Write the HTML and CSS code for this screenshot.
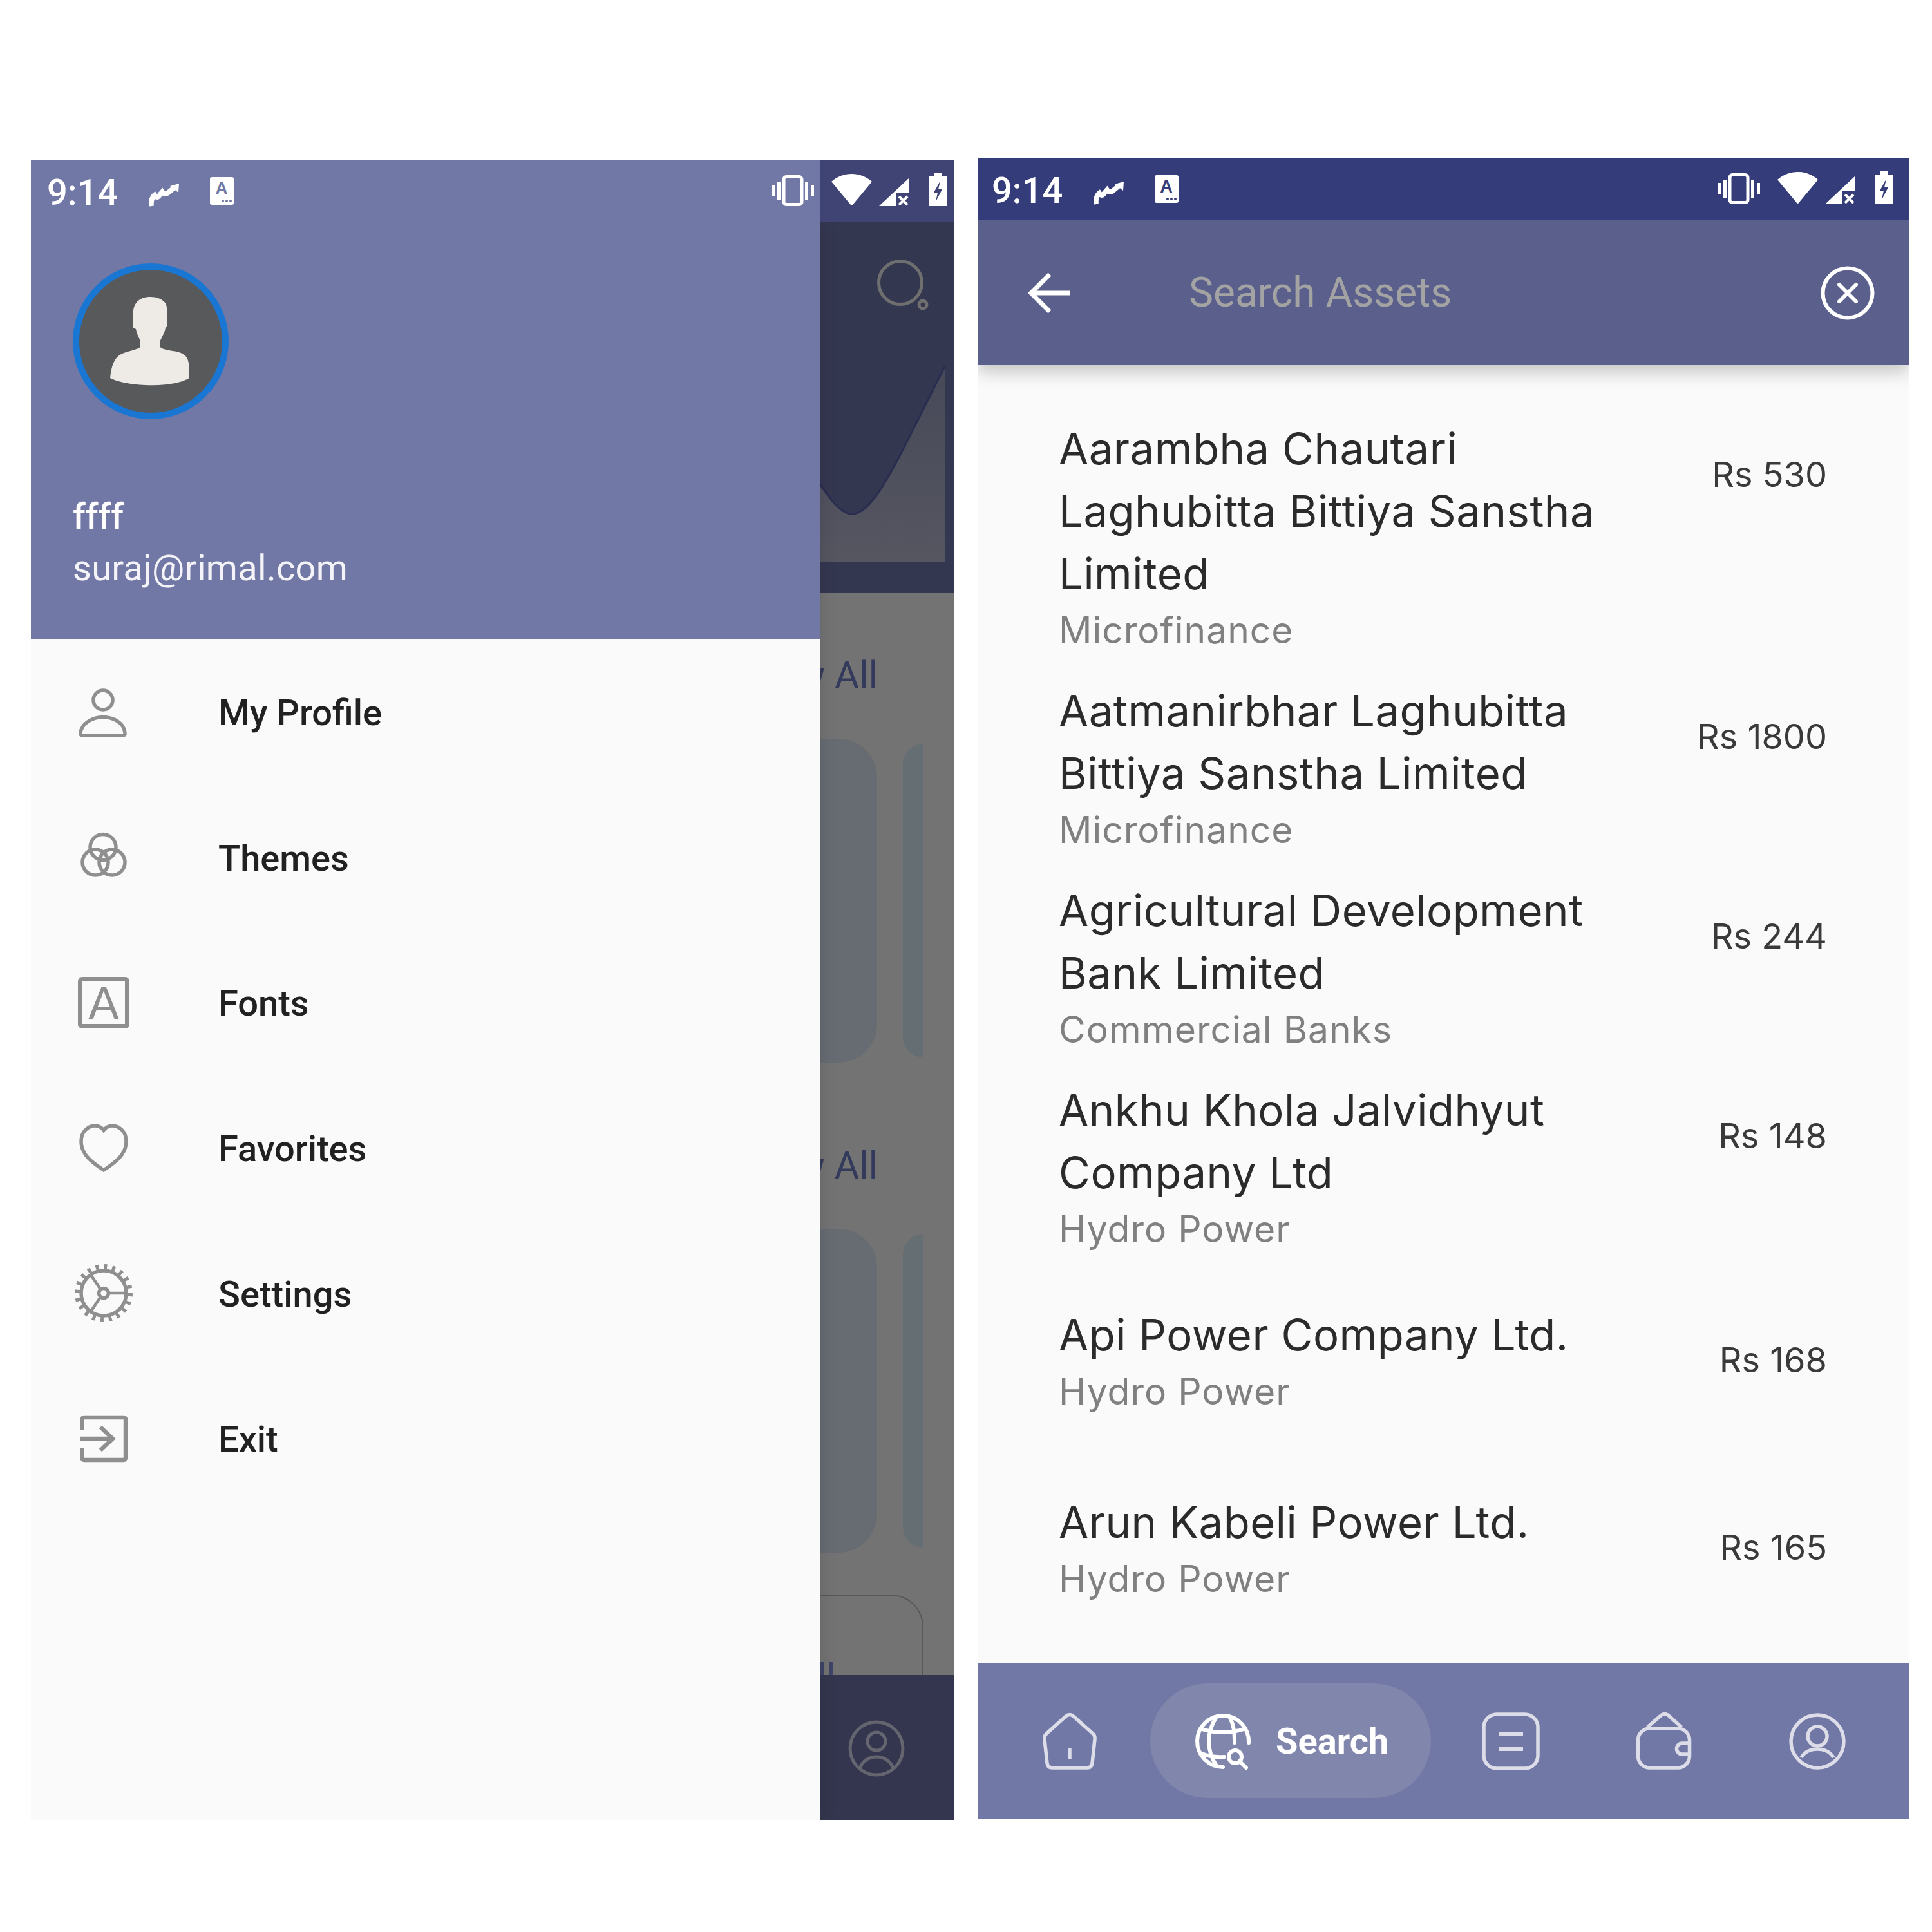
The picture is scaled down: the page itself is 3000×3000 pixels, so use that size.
FILE: index.html
```html
<!DOCTYPE html>
<html lang="en">
<head>
<meta charset="UTF-8">
<title>Assets</title>
<link rel="stylesheet" href="styles.css">
</head>
<body>
<div class="stage">

    <!-- drawer open over the home screen -->
    <div class="phone phone-left">
        <div class="status status-drawer">
            <span class="time">9:14</span>
            <svg class="ic-trend" viewBox="0 0 46 36"><path d="M3 35C2 28 4 21 8 18C10 21 12 22 14 20L20 13C22 16 25 17 28 15L38 7" fill="none" stroke="#fff" stroke-width="8"/><polygon points="32,4 46,0 45,14" fill="#fff"/></svg>
            <svg class="ic-a" viewBox="0 0 37 43"><rect width="37" height="43" rx="3" fill="#fff"/><text x="18" y="27" text-anchor="middle" class="ic-a-letter">A</text><circle cx="20" cy="37" r="2" class="ic-cut"/><circle cx="26" cy="37" r="2" class="ic-cut"/><circle cx="32" cy="37" r="2" class="ic-cut"/></svg>
            <div class="status-right">
                <svg class="ic-vib" viewBox="0 0 68 48"><rect x="20" y="2.5" width="28" height="43" rx="4" fill="none" stroke="#fff" stroke-width="5"/><rect x="10" y="10" width="5" height="28" fill="#fff"/><rect x="1" y="15" width="5" height="18" fill="#fff"/><rect x="53" y="10" width="5" height="28" fill="#fff"/><rect x="62" y="15" width="5" height="18" fill="#fff"/></svg>
                <svg class="ic-wifi" viewBox="0 0 63 50"><path d="M0 12C18-4 45-4 63 12L33 48Q31.5 50 30 48Z" fill="#fff"/></svg>
                <svg class="ic-signal" viewBox="0 0 46 43"><path d="M0 43L46 0V23H26V43Z" fill="#fff"/><path d="M31 28L44 41M44 28L31 41" stroke="#fff" stroke-width="4"/></svg>
                <svg class="ic-batt" viewBox="0 0 29 52"><path d="M9 0H20V6H29V52H0V6H9Z" fill="#fff"/><path d="M18 13L8 31H14L11 45L21 26H15Z" class="ic-cut"/></svg>
            </div>
        </div>
        <div class="split">
            <div class="drawer">
                <div class="drawer-head">
                    <div class="avatar">
                        <svg viewBox="10 1 222 222"><path d="M120 43C106 43 94 51 94 67L94 91L98 93C100 103 104 107 105 113L105 121C100 125 85 127 75 132C65 137 60 149 58 169C85 183 155 185 181 169L180 146C178 133 170 129 155 127C145 125 136 124 135 119L135 113C138 105 143 99 144 91L147 87L146 61C146 49 134 43 120 43Z" fill="#eeebe7"/></svg>
                    </div>
                    <div class="user-name">ffff</div>
                    <div class="user-mail">suraj@rimal.com</div>
                </div>
                <div class="menu">
                    <div class="menu-row">
                        <svg class="menu-ic" viewBox="0 0 96 96"><circle cx="47" cy="29" r="15"/><path d="M12 80C14 64 32 55.5 47 55.5C62 55.5 80 64 81 80C81.5 83 80 84 78 84L15 84C13 84 11.5 83 12 80Z"/></svg>
                        <span>My Profile</span>
                    </div>
                    <div class="menu-row">
                        <svg class="menu-ic" viewBox="0 0 96 96"><circle cx="47" cy="32.5" r="20"/><circle cx="35" cy="56" r="20"/><circle cx="61" cy="56" r="20"/></svg>
                        <span>Themes</span>
                    </div>
                    <div class="menu-row">
                        <svg class="menu-ic" viewBox="0 0 96 96"><rect x="11.5" y="11.5" width="73" height="73" rx="3" stroke-width="7"/><text x="48" y="74" text-anchor="middle" class="menu-a">A</text></svg>
                        <span>Fonts</span>
                    </div>
                    <div class="menu-row">
                        <svg class="menu-ic" viewBox="0 0 96 96"><path d="M48 82C30 70 13 58 13 37C13 22 24 13 35 13C41 13 46 17 48 20C50 17 55 13 61 13C72 13 83 22 83 37C83 58 66 70 48 82Z"/></svg>
                        <span>Favorites</span>
                    </div>
                    <div class="menu-row">
                        <svg class="menu-ic" viewBox="0 0 96 96"><circle cx="48" cy="48" r="35"/><circle cx="48" cy="48" r="41" stroke-width="8" stroke-dasharray="5 7.88"/><circle cx="48" cy="48" r="7.5"/><path d="M55 48H83M43 42L27 18M43 54L27 78" stroke-width="4.5"/></svg>
                        <span>Settings</span>
                    </div>
                    <div class="menu-row">
                        <svg class="menu-ic" viewBox="0 0 96 96"><path d="M14.500 35V18a3 3 0 0 1 3-3H79a3 3 0 0 1 3 3V78a3 3 0 0 1-3 3H17.5a3 3 0 0 1-3-3V62" stroke-width="6.5"/><path d="M11 48H62M43 30L62 48L43 66" stroke-width="6.5"/></svg>
                        <span>Exit</span>
                    </div>
                </div>
            </div>

            <div class="peek">
                <svg class="peek-head" viewBox="0 0 209 576">
                    <defs><linearGradient id="chart-fill" x1="0" y1="0" x2="0" y2="1"><stop offset="0" stop-color="#474959"/><stop offset="1" stop-color="#555660"/></linearGradient></defs>
                    <circle cx="125" cy="94" r="33.5" fill="none" stroke="#6f6f6f" stroke-width="5"/>
                    <circle cx="160" cy="128" r="6" fill="none" stroke="#6f6f6f" stroke-width="5"/>
                    <path d="M0 406C16 430 32 453 50 453C85 453 120 370 194 224V528H0Z" fill="url(#chart-fill)"/>
                    <path d="M0 406C16 430 32 453 50 453C85 453 120 370 194 224" fill="none" stroke="#2a2c50" stroke-width="3"/>
                </svg>
                <div class="peek-body">
                    <div class="peek-link">View All</div>
                    <div class="peek-cards">
                        <div class="card-a"></div>
                        <div class="card-b"></div>
                    </div>
                    <div class="peek-link peek-link-2">View All</div>
                    <div class="peek-cards">
                        <div class="card-a"></div>
                        <div class="card-b"></div>
                    </div>
                    <div class="peek-outline"><i></i><i></i></div>
                </div>
                <div class="peek-foot">
                    <svg viewBox="0 0 96 96"><circle cx="48" cy="48" r="41"/><circle cx="48" cy="37" r="14"/><path d="M22 78C28 66 38 61 48 61C58 61 68 66 74 78"/></svg>
                </div>
            </div>
        </div>
    </div>

    <!-- search screen -->
    <div class="phone phone-right">
        <div class="status status-search">
            <span class="time">9:14</span>
            <svg class="ic-trend" viewBox="0 0 46 36"><path d="M3 35C2 28 4 21 8 18C10 21 12 22 14 20L20 13C22 16 25 17 28 15L38 7" fill="none" stroke="#fff" stroke-width="8"/><polygon points="32,4 46,0 45,14" fill="#fff"/></svg>
            <svg class="ic-a" viewBox="0 0 37 43"><rect width="37" height="43" rx="3" fill="#fff"/><text x="18" y="27" text-anchor="middle" class="ic-a-letter">A</text><circle cx="20" cy="37" r="2" class="ic-cut"/><circle cx="26" cy="37" r="2" class="ic-cut"/><circle cx="32" cy="37" r="2" class="ic-cut"/></svg>
            <div class="status-right">
                <svg class="ic-vib" viewBox="0 0 68 48"><rect x="20" y="2.5" width="28" height="43" rx="4" fill="none" stroke="#fff" stroke-width="5"/><rect x="10" y="10" width="5" height="28" fill="#fff"/><rect x="1" y="15" width="5" height="18" fill="#fff"/><rect x="53" y="10" width="5" height="28" fill="#fff"/><rect x="62" y="15" width="5" height="18" fill="#fff"/></svg>
                <svg class="ic-wifi" viewBox="0 0 63 50"><path d="M0 12C18-4 45-4 63 12L33 48Q31.5 50 30 48Z" fill="#fff"/></svg>
                <svg class="ic-signal" viewBox="0 0 46 43"><path d="M0 43L46 0V23H26V43Z" fill="#fff"/><path d="M31 28L44 41M44 28L31 41" stroke="#fff" stroke-width="4"/></svg>
                <svg class="ic-batt" viewBox="0 0 29 52"><path d="M9 0H20V6H29V52H0V6H9Z" fill="#fff"/><path d="M18 13L8 31H14L11 45L21 26H15Z" class="ic-cut"/></svg>
            </div>
        </div>
        <div class="appbar">
            <svg class="back" viewBox="0 0 65 64"><path d="M65 32H5M33 3L4 32L33 61" fill="none" stroke="#fff" stroke-width="7"/></svg>
            <span class="search-hint">Search Assets</span>
            <svg class="clear" viewBox="0 0 84 84"><circle cx="42" cy="42" r="38.5" fill="none" stroke="#fff" stroke-width="6"/><path d="M29 29L55 55M55 29L29 55" stroke="#fff" stroke-width="6" stroke-linecap="round"/></svg>
        </div>
        <div class="results">
            <div class="asset">
                <div class="asset-text">
                    <div class="asset-name">Aarambha Chautari Laghubitta Bittiya Sanstha Limited</div>
                    <div class="asset-type">Microfinance</div>
                </div>
                <div class="asset-price">Rs 530</div>
            </div>
            <div class="asset">
                <div class="asset-text">
                    <div class="asset-name">Aatmanirbhar Laghubitta Bittiya Sanstha Limited</div>
                    <div class="asset-type">Microfinance</div>
                </div>
                <div class="asset-price">Rs 1800</div>
            </div>
            <div class="asset">
                <div class="asset-text">
                    <div class="asset-name">Agricultural Development Bank Limited</div>
                    <div class="asset-type">Commercial Banks</div>
                </div>
                <div class="asset-price">Rs 244</div>
            </div>
            <div class="asset">
                <div class="asset-text">
                    <div class="asset-name">Ankhu Khola Jalvidhyut Company Ltd</div>
                    <div class="asset-type">Hydro Power</div>
                </div>
                <div class="asset-price">Rs 148</div>
            </div>
            <div class="asset">
                <div class="asset-text">
                    <div class="asset-name">Api Power Company Ltd.</div>
                    <div class="asset-type">Hydro Power</div>
                </div>
                <div class="asset-price">Rs 168</div>
            </div>
            <div class="asset">
                <div class="asset-text">
                    <div class="asset-name">Arun Kabeli Power Ltd.</div>
                    <div class="asset-type">Hydro Power</div>
                </div>
                <div class="asset-price">Rs 165</div>
            </div>
        </div>
        <div class="tabbar">
            <div class="tab">
                <svg viewBox="0 0 96 96"><path d="M42 9Q48 4 54 9L84 36Q88 40 87 45L83 82Q82 89 75 89L21 89Q14 89 13 82L9 45Q8 40 12 36Z"/><path d="M48 58V76"/></svg>
            </div>
            <div class="tab-active">
                <svg viewBox="0 0 88 88"><path d="M84 46A40 40 0 1 0 44 84"/><path d="M34 6C18 30 18 58 34 82M54 6C61 18 62 30 62 46M9 24C30 32 58 32 79 24M9 62C20 67 32 69 46 68"/><circle cx="63" cy="68" r="10"/><path d="M70 75L80 85"/></svg>
                <span>Search</span>
            </div>
            <div class="tab">
                <svg viewBox="0 0 96 96"><rect x="6" y="6" width="84" height="84" rx="20"/><path d="M30 36H67M30 60H67" stroke-width="6"/></svg>
            </div>
            <div class="tab">
                <svg viewBox="0 0 96 96"><rect x="7.5" y="28" width="80" height="61" rx="18"/><path d="M22 26L44 7Q49 4 54 7L75 26"/><path d="M88 51H76a8.5 8.5 0 0 0 0 17H88"/></svg>
            </div>
            <div class="tab">
                <svg viewBox="0 0 96 96"><circle cx="48" cy="48" r="41"/><circle cx="48" cy="40" r="15"/><path d="M23 73C28 64 38 60 48 60C58 60 68 64 73 73"/></svg>
            </div>
        </div>
    </div>

</div>
</body>
</html>
```

FILE: styles.css
```css
* {
    box-sizing: border-box;
}
body {
    margin: 0;
    background: #fff;
}
.stage {
    width: 3000px;
    height: 3000px;
    padding: 245px 36px 0 48px;
    display: flex;
    align-items: flex-start;
    gap: 36px;
    font-family: Roboto, sans-serif;
}
.phone {
    display: flex;
    flex-direction: column;
    overflow: hidden;
}
.phone-left {
    width: 1434px;
    height: 2578px;
    margin-top: 3px;
}
.phone-right {
    width: 1446px;
    height: 2579px;
}

/* status bar */
.status {
    height: 97px;
    flex: none;
    display: flex;
    align-items: center;
    position: relative;
    z-index: 2;
}
.status-drawer {
    background: linear-gradient(to right, #7278a5 1225px, #3f4474 1225px);
    padding: 0 11px 0 25px;
}
.status-search {
    background: #343c7a;
    color: #343c7a;
    padding: 0 24px 0 22px;
}
.time {
    width: 159px;
    margin-top: 6px;
    color: #fff;
    font-size: 56px;
    font-weight: 500;
    line-height: 97px;
}
.ic-trend {
    width: 46px;
    height: 36px;
    margin-top: 12px;
}
.ic-a {
    width: 37px;
    height: 43px;
    margin-left: 48px;
}
.ic-a-letter {
    font: bold 27px "Liberation Sans", sans-serif;
    fill: currentColor;
}
.ic-cut {
    fill: currentColor;
}
.status-drawer .ic-a {
    color: #7278a5;
}
.status-drawer .ic-batt {
    color: #3f4474;
}
.status-right {
    margin-left: auto;
    height: 97px;
    padding-bottom: 25px;
    display: flex;
    align-items: flex-end;
}
.ic-vib {
    width: 68px;
    height: 48px;
}
.ic-wifi {
    width: 63px;
    height: 50px;
    margin-left: 26px;
}
.ic-signal {
    width: 46px;
    height: 43px;
    margin-left: 11px;
}
.ic-batt {
    width: 29px;
    height: 52px;
    margin-left: 31px;
}

/* drawer */
.split {
    flex: 1;
    display: flex;
    min-height: 0;
}
.drawer {
    width: 1225px;
    flex: none;
    background: #fafafa;
    display: flex;
    flex-direction: column;
    position: relative;
    z-index: 1;
    box-shadow: 0 0 26px rgba(0, 0, 0, .14);
}
.drawer-head {
    height: 648px;
    padding: 64px 0 0 65px;
    background: #7278a5;
    color: #fff;
}
.avatar {
    width: 242px;
    height: 242px;
    border: 10px solid #1976d2;
    border-radius: 50%;
    background: #58595b;
    margin-bottom: 108px;
    overflow: hidden;
}
.avatar svg {
    display: block;
    width: 222px;
    height: 222px;
}
.user-name {
    font-size: 56px;
    font-weight: 500;
    line-height: 86px;
}
.user-mail {
    font-size: 56px;
    line-height: 74px;
    letter-spacing: .3px;
    color: #f4f4f8;
}
.menu-row {
    height: 225.6px;
    padding-left: 65px;
    display: flex;
    align-items: center;
    gap: 130px;
    color: #212121;
    font-size: 56px;
    font-weight: 500;
}
.menu-row span {
    padding-top: 3px;
}
.menu-ic {
    width: 96px;
    height: 96px;
    flex: none;
    fill: none;
    stroke: #8f8f8f;
    stroke-width: 5.5;
    overflow: visible;
}
.menu-a {
    font: 72px "Liberation Sans", sans-serif;
    fill: #8f8f8f;
    stroke: none;
}

/* dimmed home screen next to the drawer */
.peek {
    flex: 1;
    min-width: 0;
    display: flex;
    flex-direction: column;
    overflow: hidden;
    background: #737373;
}
.peek-head {
    display: block;
    width: 209px;
    height: 576px;
    flex: none;
    background: #343750;
}
.peek-body {
    flex: 1;
    padding-top: 88px;
    display: flex;
    flex-direction: column;
    align-items: flex-end;
}
.peek-link {
    height: 80px;
    padding-right: 119px;
    color: #333a5c;
    font-size: 59px;
    line-height: 80px;
    white-space: nowrap;
}
.peek-link-2 {
    margin-top: 120px;
}
.peek-cards {
    margin-top: 58px;
    padding-right: 48px;
    height: 503px;
    display: flex;
    align-items: center;
    gap: 40px;
}
.card-a {
    width: 240px;
    height: 503px;
    background: #676c73;
    border-radius: 60px;
}
.card-b {
    width: 32px;
    height: 487px;
    background: #656e73;
    border-radius: 32px 0 0 32px;
}
.peek-outline {
    width: 161px;
    height: 125px;
    margin: 65px 48px 0 0;
    border: 2px solid #585858;
    border-width: 2px 2px 0 0;
    border-top-right-radius: 50px;
    padding-left: 1px;
    display: flex;
    align-items: flex-end;
    gap: 9px;
}
.peek-outline i {
    width: 5px;
    height: 20px;
    background: #3f4468;
}
.peek-foot {
    height: 225px;
    flex: none;
    background: #33364e;
    display: flex;
    align-items: center;
    padding: 3px 0 0 40px;
}
.peek-foot svg {
    width: 96px;
    height: 96px;
    fill: none;
    stroke: #64656f;
    stroke-width: 5;
}

/* search screen */
.appbar {
    height: 225px;
    flex: none;
    padding: 0 53px 0 79px;
    display: flex;
    align-items: center;
    background: #5a5f8c;
    box-shadow: 0 10px 26px rgba(0, 0, 0, .22);
    position: relative;
    z-index: 1;
}
.back {
    width: 65px;
    height: 64px;
    flex: none;
}
.search-hint {
    margin-left: 184px;
    color: #a3a3a3;
    font-size: 64px;
}
.clear {
    width: 84px;
    height: 84px;
    margin-left: auto;
}
.results {
    flex: 1;
    padding-top: 63px;
    background: #fafafa;
}
.asset {
    min-height: 291px;
    padding: 18px 127px 18px 126px;
    display: flex;
    align-items: center;
    justify-content: space-between;
}
.asset-text {
    width: 880px;
    font-family: Inter, sans-serif;
}
.asset-name {
    color: #2b2b2b;
    font-size: 67px;
    line-height: 97px;
    letter-spacing: .5px;
}
.asset-type {
    color: #808080;
    font-size: 57px;
    line-height: 80px;
    letter-spacing: 1px;
}
.asset-price {
    align-self: flex-start;
    margin-top: 2px;
    color: #3a3a3a;
    font-family: Inter, sans-serif;
    font-size: 54px;
    line-height: 174px;
}
.asset:nth-child(5) .asset-price,
.asset:nth-child(6) .asset-price {
    margin-top: 40px;
}
.tabbar {
    height: 242px;
    flex: none;
    padding: 0 24px;
    display: flex;
    align-items: center;
    background: #7278a5;
}
.tab {
    width: 238px;
    flex: none;
    margin-top: 2px;
    display: flex;
    justify-content: center;
}
.tab svg {
    width: 96px;
    height: 96px;
    fill: none;
    stroke: #dcdde8;
    stroke-width: 5.5;
}
.tab-active {
    width: 436px;
    height: 178px;
    flex: none;
    margin: 0 5px 0 6px;
    padding-left: 69px;
    border-radius: 89px;
    background: #8086ac;
    display: flex;
    align-items: center;
    gap: 38px;
    color: #fff;
    font-size: 56px;
    font-weight: 700;
}
.tab-active span {
    padding-top: 2px;
}
.tab-active svg {
    width: 88px;
    height: 88px;
    margin-top: 2px;
    fill: none;
    stroke: #fff;
    stroke-width: 6;
    stroke-linecap: round;
}
```
